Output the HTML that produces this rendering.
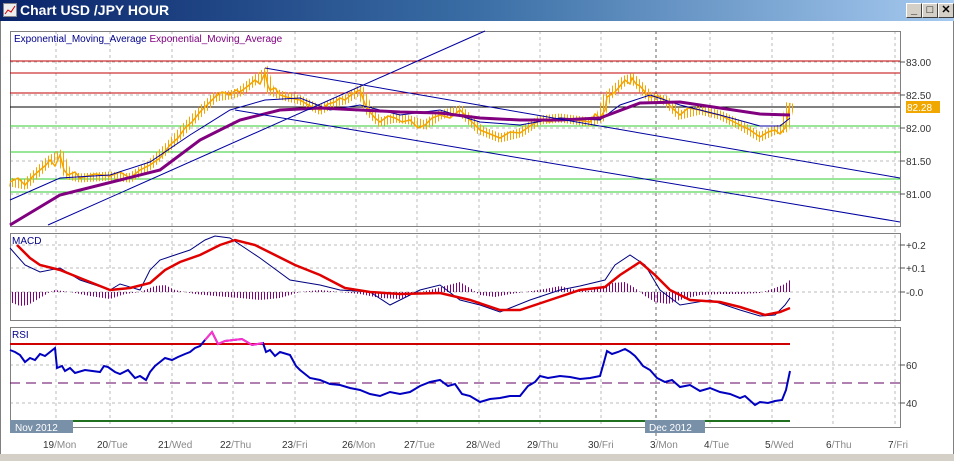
<!DOCTYPE html>
<html><head><style>
body{margin:0;width:954px;height:461px;overflow:hidden;background:#fff;font-family:"Liberation Sans",sans-serif}
.t{position:absolute;left:0;top:0;width:954px;height:21px;background:linear-gradient(90deg,#0a246a,#3a6ea5 50%,#a6caf0);}
.t span{position:absolute;left:20px;top:2px;color:#fff;font-weight:bold;font-size:14px}
.b{position:absolute;top:3px;width:14px;height:13px;background:#d4d0c8;border:1px solid;border-color:#fff #404040 #404040 #fff;font-size:11px;line-height:13px;text-align:center;font-weight:bold}
</style></head><body>
<div class="t"><svg style="position:absolute;left:3px;top:3px" width="14" height="14"><rect x="0.5" y="0.5" width="13" height="13" fill="#eee" stroke="#888"/><polyline points="2,11 5,7 8,9 12,3" fill="none" stroke="#c00"/></svg><span>Chart USD /JPY  HOUR</span></div>
<div class="b" style="left:906px">_</div><div class="b" style="left:922px">□</div><div class="b" style="left:938px">✕</div>
<div style="position:absolute;left:0;top:21px;width:952px;height:433px;border:1px solid #808080;border-top:none"></div>
<div style="position:absolute;left:0;top:454px;width:954px;height:7px;background:#d4d0c8"></div>
<svg style="position:absolute;left:0;top:0" width="954" height="461" font-family="Liberation Sans, sans-serif">
<defs>
<pattern id="hp" width="3" height="10" patternUnits="userSpaceOnUse"><rect x="0" y="0" width="1" height="10" fill="#800080"/></pattern>
<pattern id="op" width="3" height="10" patternUnits="userSpaceOnUse"><rect x="0" y="0" width="1" height="10" fill="#f5a500"/></pattern>
</defs>
<g stroke="#bbb" stroke-dasharray="3,3" stroke-width="1">
<path d="M56 31V427M110 31V427M172 31V427M233 31V427M295 31V427M356 31V427M417 31V427M479 31V427M540 31V427M601 31V427M710 31V427M772 31V427M833 31V427M895 31V427"/>
<path d="M10 62H900M10 95H900M10 128H900M10 161H900M10 194H900M10 245H900M10 268H900M10 292H900M10 365H900M10 403H900"/>
</g>
<path d="M656 31V440" stroke="#666" stroke-dasharray="3,3"/>
<g fill="none" stroke="#808080"><rect x="10.5" y="31.5" width="890" height="195"/><rect x="10.5" y="233.5" width="890" height="87"/><rect x="10.5" y="327.5" width="890" height="100"/></g>
<path d="M10 61H900M10 73H900M10 93H900" stroke="#c00000"/>
<path d="M10 107H900" stroke="#000"/>
<path d="M10 126H900M10 152H900M10 179H900M10 192H900" stroke="#3c3"/>
<polyline fill="none" stroke="url(#op)" stroke-width="9" points="10,182 25,185 40,170 50,160 60,155 68,175 80,178 110,176 130,178 150,165 170,145 185,128 200,112 215,97 230,95 240,92 255,80 265,73 270,90 280,95 300,100 320,110 335,102 345,100 360,90 370,112 380,122 395,118 410,120 425,125 440,115 460,110 480,130 500,138 520,133 540,120 560,118 590,122 600,118 607,97 625,80 632,78 640,86 650,97 665,100 680,115 700,110 720,115 740,125 760,137 775,130 785,128 790,103"/>
<polyline fill="none" stroke="#f5a500" stroke-width="1.5" points="10,182 18,178 25,185 33,176 40,170 46,165 50,160 55,166 60,155 64,170 68,175 75,172 80,178 95,174 110,176 120,172 130,178 140,170 150,165 160,158 170,145 178,138 185,128 192,122 200,112 208,104 215,97 222,92 230,95 236,90 240,92 248,86 255,80 260,84 265,73 268,86 270,90 275,88 280,95 290,98 300,100 310,106 320,110 328,104 335,102 340,98 345,100 352,94 360,90 365,104 370,112 375,118 380,122 388,116 395,118 402,122 410,120 418,128 425,125 432,118 440,115 450,118 460,110 470,120 480,130 490,134 500,138 510,132 520,133 530,126 540,120 550,122 560,118 575,120 590,122 595,114 600,118 605,110 607,97 615,92 625,80 630,84 632,78 636,84 640,86 645,92 650,97 658,96 665,100 672,108 680,115 688,108 700,110 710,113 720,115 730,120 740,125 750,130 760,137 768,132 775,130 780,134 785,128 788,115 790,103"/>
<polyline fill="none" stroke="#0000a0" points="10,200 60,178 110,175 150,162 190,135 230,110 265,100 300,98 330,110 360,105 400,115 440,110 480,122 520,125 560,118 600,120 620,105 650,95 680,105 720,115 760,126 780,126 790,118"/>
<polyline fill="none" stroke="#800080" stroke-width="3" points="10,225 60,195 120,180 160,170 200,140 240,120 280,110 320,108 360,110 400,112 440,113 480,118 520,120 560,120 600,118 640,103 680,102 720,108 760,114 790,115"/>
<path d="M48 225L485 31M265 68L900 178M235 110L900 222" stroke="#0000a0" fill="none"/>
<text x="14" y="42" font-size="10" fill="#00008b">Exponential_Moving_Average <tspan fill="#800080">Exponential_Moving_Average</tspan></text>
<polygon fill="url(#hp)" points="10,292 10,302 20,306 28,305 40,298 50,292 55,290 70,292 90,296 110,299 125,294 140,292 155,286 165,285 175,290 195,294 215,296 240,298 260,300 280,298 300,292 320,290 340,292 360,294 380,298 400,299 415,293 430,290 445,286 460,282 470,288 480,295 495,297 510,294 525,292 545,289 560,286 575,290 590,291 600,287 612,283 625,282 635,288 645,296 655,302 668,304 680,300 700,295 720,294 740,294 760,293 775,288 785,284 790,280 790,292"/>
<polyline fill="none" stroke="#000080" points="10,248 25,265 40,272 60,268 80,280 110,290 120,284 140,290 150,270 160,260 175,255 190,250 205,240 215,236 230,238 245,248 260,258 290,280 320,285 340,290 370,292 390,305 420,290 440,285 460,300 480,305 500,312 530,300 560,290 580,286 605,280 615,265 630,255 645,265 660,290 680,305 710,300 740,310 760,316 775,315 785,305 790,298"/>
<polyline fill="none" stroke="#e00000" stroke-width="2.5" points="17,245 30,258 40,265 60,270 80,278 110,290 130,288 150,283 165,270 180,262 200,255 220,245 235,240 255,245 275,255 295,265 320,275 345,288 370,292 400,294 440,293 470,300 500,310 520,310 550,300 580,290 605,287 620,275 640,262 655,275 670,290 690,300 720,302 740,307 765,315 780,312 790,308"/>
<text x="12" y="244" font-size="10" fill="#00008b">MACD</text>
<path d="M10 344H790" stroke="#d00000" stroke-width="2"/>
<path d="M10 383H900" stroke="#600060" stroke-dasharray="10,6"/>
<path d="M10 421H790" stroke="#207020" stroke-width="2"/>
<polyline fill="none" stroke="#0000c0" stroke-width="2" points="10,350 15,352 20,355 25,362 30,358 35,360 40,354 45,356 50,352 55,348 57,368 62,366 65,371 70,368 75,373 85,370 100,372 104,366 108,367 115,372 120,374 128,370 135,378 140,376 146,380 150,372 155,366 160,362 165,358 172,360 178,357 185,354 190,352 195,348 200,346 205,340 212,332 218,344 225,341 242,339 252,345 263,343 266,352 270,350 275,356 280,352 290,355 296,366 300,370 310,378 320,380 330,384 340,385 350,388 360,390 370,394 380,396 390,392 400,394 410,392 420,386 430,382 440,380 448,386 455,384 462,394 470,396 480,402 490,399 500,398 510,396 520,396 528,386 535,382 540,376 548,378 560,376 570,377 580,379 590,378 600,376 604,362 607,351 612,354 618,352 625,349 630,352 635,356 640,362 643,366 650,370 657,378 665,382 672,380 680,387 690,385 700,391 710,388 720,392 730,394 740,398 745,396 755,405 760,402 768,403 775,401 782,400 786,390 790,371"/>
<polyline fill="none" stroke="#ff33cc" stroke-width="2" points="205,340 212,332 218,344 225,341 242,339 252,345 263,343"/>
<text x="12" y="338" font-size="10" fill="#00008b">RSI</text>
<rect x="10" y="420" width="63" height="13" fill="#7890a8"/><text x="15" y="431" font-size="10" fill="#fff">Nov 2012</text>
<rect x="645" y="420" width="60" height="13" fill="#7890a8"/><text x="649" y="431" font-size="10" fill="#fff">Dec 2012</text>
<g font-size="10" fill="#333"><text x="906" y="66">83.00</text><text x="906" y="99">82.50</text><text x="906" y="132">82.00</text><text x="906" y="165">81.50</text><text x="906" y="198">81.00</text>
<text x="906" y="249">+0.2</text><text x="906" y="272">+0.1</text><text x="906" y="296">-0.0</text><text x="906" y="369">60</text><text x="906" y="407">40</text></g>
<rect x="906" y="101" width="34" height="12" fill="#f0a800"/><text x="907" y="111" font-size="10" fill="#fff">82.28</text>
<g stroke="#555"><path d="M900 62h5M900 95h5M900 128h5M900 161h5M900 194h5M900 245h5M900 268h5M900 292h5M900 365h5M900 403h5"/></g>
<g font-size="10" fill="#888"><text x="43" y="448"><tspan fill="#333">19</tspan>/Mon</text><text x="97" y="448"><tspan fill="#333">20</tspan>/Tue</text><text x="158" y="448"><tspan fill="#333">21</tspan>/Wed</text><text x="220" y="448"><tspan fill="#333">22</tspan>/Thu</text><text x="282" y="448"><tspan fill="#333">23</tspan>/Fri</text><text x="342" y="448"><tspan fill="#333">26</tspan>/Mon</text><text x="404" y="448"><tspan fill="#333">27</tspan>/Tue</text><text x="466" y="448"><tspan fill="#333">28</tspan>/Wed</text><text x="527" y="448"><tspan fill="#333">29</tspan>/Thu</text><text x="588" y="448"><tspan fill="#333">30</tspan>/Fri</text><text x="650" y="448"><tspan fill="#333">3</tspan>/Mon</text><text x="704" y="448"><tspan fill="#333">4</tspan>/Tue</text><text x="765" y="448"><tspan fill="#333">5</tspan>/Wed</text><text x="826" y="448"><tspan fill="#333">6</tspan>/Thu</text><text x="888" y="448"><tspan fill="#333">7</tspan>/Fri</text></g>
</svg>
</body></html>
